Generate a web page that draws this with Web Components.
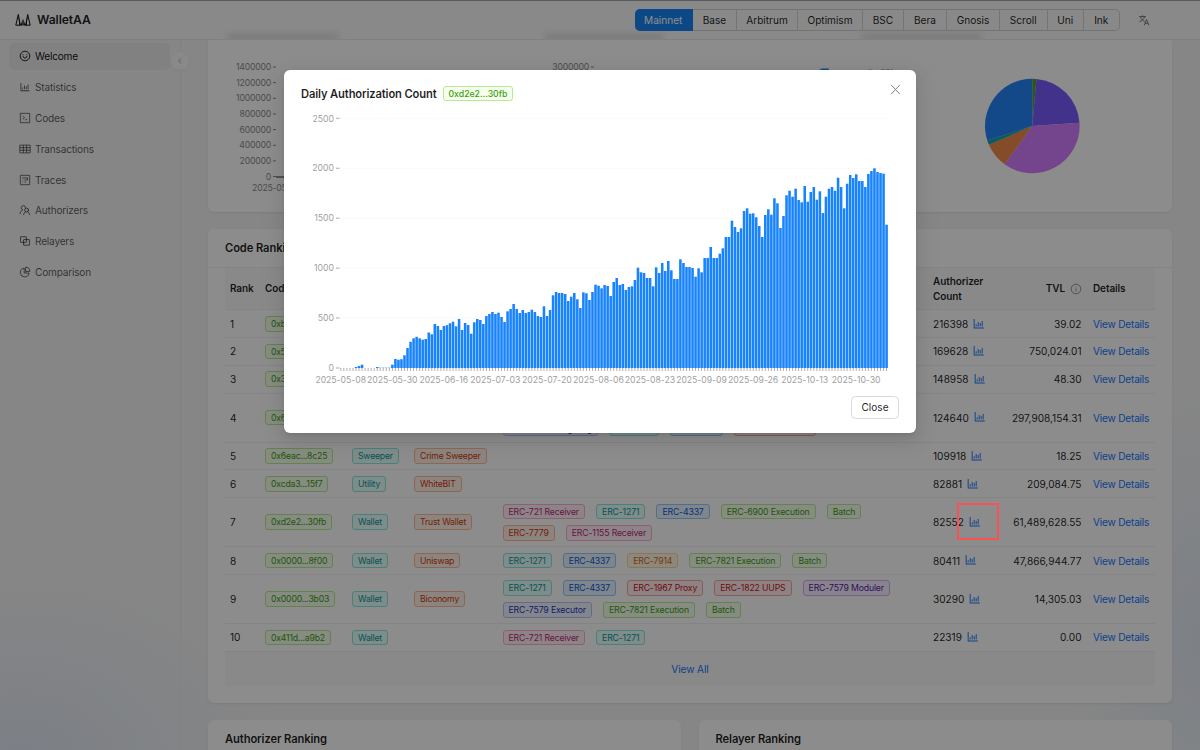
<!DOCTYPE html>
<html lang="en">
<head>
<meta charset="utf-8">
<title>WalletAA</title>
<style>
  html, body { margin: 0; height: 100%; }
  body {
    width: 1200px;
    height: 750px;
    overflow: hidden;
    font-family: Inter, "Liberation Sans", sans-serif;
    font-size: 10.1px;
    color: rgba(0, 0, 0, 0.88);
  }
</style>
</head>
<body>
<wallet-app></wallet-app>

<script>
(function(){
  const ICONS = {
    smile: '<g fill="none" stroke="currentColor" stroke-width="76"><circle cx="512" cy="512" r="410"/><path d="M350 540c15 95 80 150 162 150s147-55 162-150" stroke-linecap="round"/></g><circle cx="350" cy="410" r="46"/><circle cx="674" cy="410" r="46"/>',
    bar: '<path d="M888 792H200V168c0-4.4-3.6-8-8-8h-56c-4.4 0-8 3.6-8 8v688c0 4.4 3.6 8 8 8h752c4.4 0 8-3.6 8-8v-56c0-4.4-3.6-8-8-8zm-600-80h56c4.4 0 8-3.6 8-8V560c0-4.4-3.6-8-8-8h-56c-4.4 0-8 3.6-8 8v144c0 4.4 3.6 8 8 8zm152 0h56c4.4 0 8-3.6 8-8V384c0-4.4-3.6-8-8-8h-56c-4.4 0-8 3.6-8 8v320c0 4.4 3.6 8 8 8zm152 0h56c4.4 0 8-3.6 8-8V462c0-4.4-3.6-8-8-8h-56c-4.4 0-8 3.6-8 8v242c0 4.4 3.6 8 8 8zm152 0h56c4.4 0 8-3.6 8-8V304c0-4.4-3.6-8-8-8h-56c-4.4 0-8 3.6-8 8v400c0 4.4 3.6 8 8 8z"/>',
    code: '<g fill="none" stroke="currentColor" stroke-width="72"><rect x="112" y="112" width="800" height="800" rx="12"/><path d="M320 350l160 140-160 140M530 660h170"/></g>',
    table: '<g fill="none" stroke="currentColor" stroke-width="72"><rect x="70" y="180" width="884" height="664" rx="12"/><path d="M70 400h884M70 620h884M370 180v664M654 180v664"/></g>',
    trace: '<g fill="none" stroke="currentColor" stroke-width="72"><rect x="112" y="112" width="800" height="800" rx="12"/><path d="M290 330h444M290 510h70M460 510h270M290 690h70M460 690h150M730 330v180"/></g>',
    user: '<g fill="none" stroke="currentColor" stroke-width="76" stroke-linecap="round"><path d="M560 330a185 185 0 1 0-240 170C190 560 100 680 90 830"/><circle cx="650" cy="520" r="165"/><path d="M750 670c80 60 140 150 170 240M540 660c-70 60-120 140-150 250"/></g>',
    relay: '<g fill="none" stroke="currentColor" stroke-width="78"><rect x="130" y="150" width="500" height="480" rx="20"/><rect x="390" y="390" width="500" height="480" rx="20"/></g>',
    pie: '<g fill="none" stroke="currentColor" stroke-width="74"><path d="M440 190a370 370 0 1 0 410 410H440z"/><path d="M560 100a370 370 0 0 1 370 350l-370 30z"/></g>',
    info: '<g fill="none" stroke="currentColor" stroke-width="66"><circle cx="512" cy="512" r="410"/><path d="M512 450v270M512 310v70"/></g>',
    close: '<path d="M170 150l684 724M854 150L170 874" fill="none" stroke="currentColor" stroke-width="72"/>',
    left: '<path d="M660 200L330 512l330 312" fill="none" stroke="currentColor" stroke-width="90"/>',
    lang: '<g fill="none" stroke="currentColor" stroke-width="70"><path d="M90 210h560M370 110v100M540 210C500 400 330 560 120 640M210 250c40 160 180 300 340 370M510 920l190-470 190 470M580 760h240"/></g>'
  };

  const NAV = [
    ['smile', 'Welcome'], ['bar', 'Statistics'], ['code', 'Codes'], ['table', 'Transactions'],
    ['trace', 'Traces'], ['user', 'Authorizers'], ['relay', 'Relayers'], ['pie', 'Comparison']
  ];

  // label, button width
  const CHAINS = [
    ['Mainnet', 58.5], ['Base', 44], ['Arbitrum', 61], ['Optimism', 65], ['BSC', 41],
    ['Bera', 43], ['Gnosis', 53], ['Scroll', 47.5], ['Uni', 36.5], ['Ink', 35.5]
  ];

  const R721 = ['magenta', 'ERC-721 Receiver'];
  const E1271 = ['cyan', 'ERC-1271'];
  const E4337 = ['blue', 'ERC-4337'];
  const E7821 = ['green', 'ERC-7821 Execution'];
  const BATCH = ['green', 'Batch'];

  const ROWS = [
    { code: '0xb1...0e2a', count: '216398', tvl: '39.02' },
    { code: '0x57...c91d', count: '169628', tvl: '750,024.01' },
    { code: '0x3c...7b40', count: '148958', tvl: '48.30' },
    { code: '0x63...32b2', count: '124640', tvl: '297,908,154.31',
      tags: [[BATCH], [['geekblue', 'ERC-7821 Delegating'], E1271, E4337, ['red', 'ERC-721 Receiver']]] },
    { code: '0x6eac...8c25', type: 'Sweeper', by: 'Crime Sweeper', count: '109918', tvl: '18.25' },
    { code: '0xcda3...15f7', type: 'Utility', by: 'WhiteBIT', count: '82881', tvl: '209,084.75' },
    { code: '0xd2e2...30fb', type: 'Wallet', by: 'Trust Wallet', count: '82552', tvl: '61,489,628.55',
      tags: [[R721, E1271, E4337, ['green', 'ERC-6900 Execution'], BATCH], [['volcano', 'ERC-7779'], ['magenta', 'ERC-1155 Receiver']]] },
    { code: '0x0000...8f00', type: 'Wallet', by: 'Uniswap', count: '80411', tvl: '47,866,944.77',
      tags: [[E1271, E4337, ['orange', 'ERC-7914'], E7821, BATCH]] },
    { code: '0x0000...3b03', type: 'Wallet', by: 'Biconomy', count: '30290', tvl: '14,305.03',
      tags: [[E1271, E4337, ['red', 'ERC-1967 Proxy'], ['red', 'ERC-1822 UUPS'], ['purple', 'ERC-7579 Moduler']],
             [['geekblue', 'ERC-7579 Executor'], E7821, BATCH]] },
    { code: '0x411d...a9b2', type: 'Wallet', count: '22319', tvl: '0.00', tags: [[R721, E1271]] }
  ];

  const DAILY = [
    0,0,0,0,0,10,20,33,0,0,0,0,10,3,3,3,3,33,90,83,88,127,200,262,297,312,297,283,290,355,337,
    440,420,380,420,428,447,463,417,490,380,450,430,343,457,490,480,440,520,540,560,540,553,510,460,
    567,590,640,590,550,580,550,560,583,560,520,510,617,520,580,727,760,750,750,740,670,713,750,687,
    600,757,747,680,760,833,823,797,830,820,720,860,900,830,840,780,810,817,880,1003,957,950,900,900,
    817,1007,950,1050,970,1070,977,890,890,1087,1050,1010,1010,1000,913,997,957,1100,1100,1210,1100,
    1100,1143,1197,1310,1310,1473,1410,1360,1397,1570,1597,1543,1547,1507,1420,1310,1530,1587,1533,
    1697,1647,1400,1520,1727,1773,1713,1793,1680,1657,1820,1663,1760,1810,1683,1767,1550,1713,1793,
    1810,1773,1903,1810,1597,1843,1930,1900,1937,1870,1870,1810,1940,1970,1997,1960,1950,1943,1433
  ];
  const DAYS = ['2025-05-08', '2025-05-30', '2025-06-16', '2025-07-03', '2025-07-20', '2025-08-06',
    '2025-08-23', '2025-09-09', '2025-09-26', '2025-10-13', '2025-10-30'];

  class WaIcon extends HTMLElement{
    connectedCallback(){
      const size = this.getAttribute('size') || '12';
      this.attachShadow({mode:'open'});
      this.shadowRoot.innerHTML = `
        <style>
          :host{ display:inline-flex; flex:none; }
          svg{ width:${size}px; height:${size}px; fill:currentColor; }
        </style>
        <svg viewBox="0 0 1024 1024">${ICONS[this.getAttribute('name')]}</svg>`;
    }
  }

  class WaTag extends HTMLElement{
    connectedCallback(){
      this.attachShadow({mode:'open'});
      this.shadowRoot.innerHTML = `
        <style>
          :host{
            display:inline-block;
            box-sizing:border-box;
            height:15.6px;
            line-height:14.8px;
            padding:0 5px;
            border:1px solid #b7eb8f;
            border-radius:3px;
            background:#f6ffed;
            color:#389e0d;
            font-size:8.7px;
            letter-spacing:var(--tag-spacing, 0);
            white-space:nowrap;
          }
          :host([color=cyan]){ color:#08979c; background:#e6fffb; border-color:#87e8de; }
          :host([color=blue]){ color:#0958d9; background:#e6f4ff; border-color:#91caff; }
          :host([color=geekblue]){ color:#1d39c4; background:#f0f5ff; border-color:#adc6ff; }
          :host([color=magenta]){ color:#c41d7f; background:#fff0f6; border-color:#ffadd2; }
          :host([color=volcano]){ color:#d4380d; background:#fff2e8; border-color:#ffbb96; }
          :host([color=orange]){ color:#d46b08; background:#fff7e6; border-color:#ffd591; }
          :host([color=red]){ color:#cf1322; background:#fff1f0; border-color:#ffa39e; }
          :host([color=purple]){ color:#531dab; background:#f9f0ff; border-color:#d3adf7; }
        </style>
        <slot></slot>`;
    }
  }

  class WaHeader extends HTMLElement{
    connectedCallback(){
      this.attachShadow({mode:'open'});
      this.shadowRoot.innerHTML = `
        <style>
          :host{
            display:flex;
            align-items:center;
            box-sizing:border-box;
            height:39.5px;
            padding:0 50px 0 15px;
            border-top:1px solid #a2a2a6;
            border-bottom:1px solid #eaeaea;
            background:#f9f9f9;
            position:relative;
            overflow:hidden;
          }
          .logo{ width:16px; height:13px; margin-right:6px; }
          .name{ font-size:12.2px; font-weight:600; flex:1; letter-spacing:-.1px; }
          .chains{ display:flex; height:22px; margin-right:18px; }
          .chains span{
            box-sizing:border-box;
            display:flex;
            align-items:center;
            justify-content:center;
            border:1px solid #d4d4d4;
            border-left:0;
            font-size:10.1px;
          }
          .chains span:first-child{
            background:#1683f5;
            border-color:#1683f5;
            color:#fff;
            border-radius:5px 0 0 5px;
          }
          .chains span:last-child{ border-radius:0 5px 5px 0; }
          wa-icon{ color:#666; }
          /* page content showing through the frosted bar */
          .ghost{ position:absolute; top:33px; height:7px; background:#c4c4c4; filter:blur(3px); opacity:.5; }
        </style>
        <i class="ghost" style="left:228px;width:110px"></i>
        <i class="ghost" style="left:545px;width:118px"></i>
        <i class="ghost" style="left:862px;width:120px"></i>
        <svg class="logo" viewBox="0 0 16 13"><path d="M.8 12.200L3.300 1.500 5.200 12.200zM15.200 12.200L12.700 1.500 10.800 12.200z" fill="none" stroke="#111" stroke-width="1"/><path d="M3.300 .8L5.700 12.600H4.300zM12.700 .8l-2.400 11.800h1.400zM5.600 12.600l2.100-6.800v6.800zM8.300 12.600V5.800l2.100 6.800z" fill="#111"/></svg>
        <div class="name">WalletAA</div>
        <div class="chains">${CHAINS.map(([n, w]) => `<span style="width:${w}px">${n}</span>`).join('')}</div>
        <wa-icon name="lang" size="12.500"></wa-icon>`;
    }
  }

  class WaSider extends HTMLElement{
    connectedCallback(){
      this.attachShadow({mode:'open'});
      this.shadowRoot.innerHTML = `
        <style>
          :host{
            display:block;
            box-sizing:border-box;
            width:181px;
            padding:3px 10px 0 9px;
            border-right:1px solid #ececec;
            position:relative;
          }
          .item{
            display:flex;
            align-items:center;
            gap:4.500px;
            height:27.700px;
            margin-bottom:3.150px;
            padding-left:9.500px;
            border-radius:5px;
            letter-spacing:-.2px;
            color:rgba(0, 0, 0, .65);
          }
          .item:first-child{ background:#ececec; color:rgba(0, 0, 0, .95); }
          .fold{
            position:absolute;
            right:-9px;
            top:12px;
            width:18px;
            height:18px;
            display:flex;
            align-items:center;
            justify-content:center;
            border-radius:50%;
            background:#fafafa;
            box-shadow:0 1px 4px rgba(0, 0, 0, .06);
            color:#8a8a8a;
          }
        </style>
        <nav>${NAV.map(([i, t]) => `<div class="item"><wa-icon name="${i}"></wa-icon><span>${t}</span></div>`).join('')}</nav>
        <div class="fold"><wa-icon name="left" size="8"></wa-icon></div>`;
    }
  }

  class WaCard extends HTMLElement{
    connectedCallback(){
      const title = this.getAttribute('title_');
      this.attachShadow({mode:'open'});
      this.shadowRoot.innerHTML = `
        <style>
          :host{
            display:block;
            box-sizing:border-box;
            background:#fff;
            border-radius:6px;
            box-shadow:0 1px 2px rgba(0, 0, 0, .06), 0 1px 5px rgba(0, 0, 0, .03);
          }
          h3{
            margin:0;
            box-sizing:border-box;
            height:38.500px;
            line-height:38px;
            padding:0 17px;
            font-size:11.200px;
            font-weight:600;
            letter-spacing:-.1px;
            border-bottom:1px solid #f0f0f0;
          }
        </style>
        ${title ? `<h3>${title}</h3>` : ''}
        <slot></slot>`;
    }
  }

  class WaOverview extends HTMLElement{
    connectedCallback(){
      const ticks = [1400000, 1200000, 1000000, 800000, 600000, 400000, 200000, 0];
      const pie = [[0, 5, '#4f9d2c'], [5, 86, '#7b5cff'], [86, 216, '#d47fff'],
        [216, 246.5, '#f08a4b'], [246.5, 252, '#13a8a8'], [252, 360, '#2485fa']];
      const pt = a => {
        const r = a * Math.PI / 180;
        return (824.3 + 47.3 * Math.sin(r)).toFixed(2) + ' ' + (86 - 47.3 * Math.cos(r)).toFixed(2);
      };
      this.attachShadow({mode:'open'});
      this.shadowRoot.innerHTML = `
        <style>
          :host{ display:block; }
          svg{ display:block; width:963px; height:172.500px; }
          text{ font-size:8.7px; letter-spacing:-.22px; fill:#8c8c8c; }
        </style>
        <svg viewBox="0 0 963 172.500">
          ${ticks.map((t, i) => `<text x="63" y="${(30 + i * 15.65).toFixed(2)}" text-anchor="end">${t}</text>
          <path d="M65 ${(27 + i * 15.65).toFixed(2)}h3" stroke="#8c8c8c"/>`).join('')}
          <path d="M68 137h10" stroke="#6f6f6f" stroke-width="1.500"/>
          <text x="68.500" y="151" text-anchor="middle">2025-05-08</text>
          <text x="381" y="30" text-anchor="end">3000000</text>
          <path d="M383 27h3" stroke="#8c8c8c"/>
          <path d="M609 31l5-2.500h7l-1 3z" fill="#2485fa"/>
          <path d="M660 30.200h5M669 30.200h1M673 30h12" stroke="#777" stroke-width="1" stroke-dasharray="4 1"/>
          ${pie.map(([a, b, c]) => `<path d="M824.300 86L${pt(a)}A47.300 47.300 0 0 1 ${pt(b)}z" fill="${c}"/>`).join('')}
        </svg>`;
    }
  }

  class WaRanking extends HTMLElement{
    connectedCallback(){
      const tag = (c, t) => t ? `<wa-tag color="${c}">${t}</wa-tag>` : '';
      this.attachShadow({mode:'open'});
      this.shadowRoot.innerHTML = `
        <style>
          :host{ display:block; padding:0 16.500px 17px 17px; }
          .row{
            display:grid;
            grid-template-columns:35px 87px 62px 88.500px 430.500px 68px 92px 1fr;
            align-items:center;
            box-sizing:border-box;
            min-height:27.740px;
            border-bottom:1px solid #f0f0f0;
          }
          .row.tall{ min-height:49.100px; }
          .row > div{ padding-left:5px; }
          .head{
            height:42.500px;
            background:#fafafa;
            font-weight:600;
            font-size:10px;
            letter-spacing:-.1px;
            line-height:15px;
          }
          .line{ display:flex; gap:11.100px; }
          .line + .line{ margin-top:5.900px; }
          .count{ display:flex; align-items:center; gap:4px; white-space:nowrap; }
          .row > .tvl{ padding:0 6.500px 0 0; text-align:right; white-space:nowrap; }
          .tvl wa-icon{ vertical-align:-3px; margin-left:2px; color:#777; }
          .count wa-icon{ margin-top:-1px; }
          .count wa-icon, a{ color:#1677ff; }
          a{ letter-spacing:-.2px; }
          wa-tag{ --tag-spacing:-.2px; }
          .erc wa-tag{ --tag-spacing:-.15px; }
          .more{
            display:flex;
            align-items:center;
            justify-content:center;
            height:34px;
            background:#fafafa;
            color:#1677ff;
            letter-spacing:-.1px;
          }
        </style>
        <div class="row head">
          <div>Rank</div><div>Code</div><div>Type</div><div>Provider</div><div>Tags</div>
          <div>Authorizer Count</div>
          <div class="tvl">TVL <wa-icon name="info" size="12"></wa-icon></div>
          <div>Details</div>
        </div>
        ${ROWS.map((r, i) => `<div class="row${r.tags && r.tags.length > 1 ? ' tall' : ''}">
          <div>${i + 1}</div>
          <div>${tag('green', r.code)}</div>
          <div>${tag('cyan', r.type)}</div>
          <div>${tag('volcano', r.by)}</div>
          <div class="erc">${(r.tags || []).map(l => `<div class="line">${l.map(t => tag(t[0], t[1])).join('')}</div>`).join('')}</div>
          <div class="count">${r.count}<wa-icon name="bar" size="13.500"></wa-icon></div>
          <div class="tvl">${r.tvl}</div>
          <div><a>View Details</a></div>
        </div>`).join('')}
        <div class="more">View All</div>`;
    }
  }

  class WaDailyChart extends HTMLElement{
    connectedCallback(){
      const step = 3.032, x0 = 38.3, y0 = 259;
      const bars = DAILY.map((v, i) => {
        const h = v * 0.1;
        return `<rect x="${(x0 + i * step + .25).toFixed(2)}" y="${(y0 - h).toFixed(2)}" width="2.550" height="${h.toFixed(2)}"/>`;
      }).join('');
      const marks = DAILY.map((v, i) => `M${(x0 + (i + .5) * step).toFixed(2)} ${y0}v3`).join('');
      this.attachShadow({mode:'open'});
      this.shadowRoot.innerHTML = `
        <style>
          :host{ display:block; }
          svg{ display:block; width:598px; height:280px; overflow:visible; }
          text{ font-size:8.7px; fill:#a0a0a0; }
          .day{ letter-spacing:-.04px; }
        </style>
        <svg viewBox="0 0 598 280">
          ${[2500, 2000, 1500, 1000, 500, 0].map((v, i) => `
            <path d="M${x0} ${(9.3 + i * 49.94).toFixed(2)}H587" stroke="#fafafa"/>
            <path d="M35 ${(9.3 + i * 49.94).toFixed(2)}h3.500" stroke="#aaa"/>
            <text x="33" y="${(12.500 + i * 49.94).toFixed(2)}" text-anchor="end">${v}</text>`).join('')}
          <g fill="#1783ff">${bars}</g>
          <path d="${marks}" stroke="#999" stroke-width=".8"/>
          ${DAYS.map((d, i) => `<text class="day" x="${(39.7 + i * 17 * step).toFixed(2)}" y="274" text-anchor="middle">${d}</text>`).join('')}
        </svg>`;
    }
  }

  class WaModal extends HTMLElement{
    connectedCallback(){
      this.attachShadow({mode:'open'});
      this.shadowRoot.innerHTML = `
        <style>
          :host{
            position:absolute;
            inset:0;
            display:flex;
            justify-content:center;
            align-items:flex-start;
            padding-top:70px;
            background:rgba(0, 0, 0, .45);
          }
          .box{
            box-sizing:border-box;
            width:632px;
            height:362.500px;
            padding:15px 17px 14px;
            border-radius:6px;
            background:#fff;
            box-shadow:0 5px 13px rgba(0, 0, 0, .08), 0 3px 5px -3px rgba(0, 0, 0, .12), 0 7px 22px 6px rgba(0, 0, 0, .05);
          }
          .top{ display:flex; align-items:center; gap:6px; height:17px; }
          h2{ margin:0; font-size:11.200px; font-weight:600; letter-spacing:-.13px; }
          ::slotted(wa-tag){ font-weight:500; }
          .top wa-icon{ margin:-8px -3px 0 auto; color:#777; }
          .chart{ margin-top:7px; height:280px; }
          .foot{ display:flex; justify-content:flex-end; margin-top:7px; }
          button{
            width:48px;
            height:22.500px;
            padding:0;
            border:1px solid #d9d9d9;
            border-radius:4.500px;
            background:#fff;
            font:inherit;
            color:inherit;
          }
        </style>
        <div class="box">
          <div class="top">
            <h2>Daily Authorization Count</h2>
            <slot name="tag"></slot>
            <wa-icon name="close" size="13"></wa-icon>
          </div>
          <div class="chart"><slot></slot></div>
          <div class="foot"><button>Close</button></div>
        </div>`;
    }
  }

  class WalletApp extends HTMLElement{
    connectedCallback(){
      this.attachShadow({mode:'open'});
      this.shadowRoot.innerHTML = `
        <style>
          :host{
            display:flex;
            flex-direction:column;
            width:1200px;
            height:750px;
            position:relative;
            overflow:hidden;
            background:
              radial-gradient(ellipse 260px 190px at 20px 760px, rgba(205, 218, 240, .5), transparent),
              radial-gradient(ellipse 130px 260px at 1200px 640px, rgba(215, 226, 242, .6), transparent),
              #f5f5f5;
          }
          .body{ display:flex; flex:1; min-height:0; }
          main{
            flex:1;
            display:flex;
            flex-direction:column;
            gap:17.400px;
            padding:0 28.500px 0 27px;
          }
          main > wa-card{ flex:none; }
          .first{ border-radius:0 0 6px 6px; }
          .pair{ display:grid; grid-template-columns:1fr 1fr; gap:17.500px; }
          .pair wa-card{ height:80px; }
          .mark{
            position:absolute;
            left:957px;
            top:503px;
            width:42px;
            height:37px;
            box-sizing:border-box;
            border:2px solid #fb5154;
          }
        </style>
        <wa-header></wa-header>
        <div class="body">
          <wa-sider></wa-sider>
          <main>
            <wa-card class="first"><wa-overview></wa-overview></wa-card>
            <wa-card title_="Code Ranking"><wa-ranking></wa-ranking></wa-card>
            <div class="pair">
              <wa-card title_="Authorizer Ranking"></wa-card>
              <wa-card title_="Relayer Ranking"></wa-card>
            </div>
          </main>
        </div>
        <wa-modal>
          <wa-tag slot="tag">0xd2e2...30fb</wa-tag>
          <wa-daily-chart></wa-daily-chart>
        </wa-modal>
        <div class="mark"></div>`;
    }
  }

  customElements.define('wa-icon', WaIcon);
  customElements.define('wa-tag', WaTag);
  customElements.define('wa-header', WaHeader);
  customElements.define('wa-sider', WaSider);
  customElements.define('wa-card', WaCard);
  customElements.define('wa-overview', WaOverview);
  customElements.define('wa-ranking', WaRanking);
  customElements.define('wa-daily-chart', WaDailyChart);
  customElements.define('wa-modal', WaModal);
  customElements.define('wallet-app', WalletApp);
})();
</script>
</body>
</html>
